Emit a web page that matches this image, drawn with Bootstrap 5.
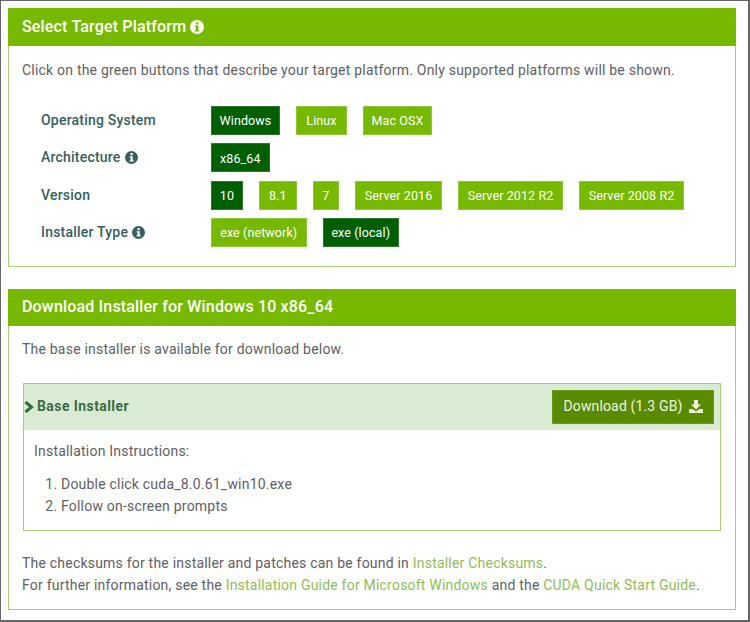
<!DOCTYPE html>
<html lang="en"><head><meta charset="utf-8"><title>CUDA Installer</title>
<link href="https://cdn.jsdelivr.net/npm/bootstrap@5.3.0/dist/css/bootstrap.min.css" rel="stylesheet">
<style>
html,body{margin:0;background:#fff}
.shot-frame{width:750px;height:622px;border:1px solid #666;border-right-width:2px;border-bottom-width:2px;padding:7px 12px 0 7px;font-family:Roboto,"Liberation Sans",sans-serif;font-size:14px;letter-spacing:.21px;color:#606064;overflow:hidden}
.panel-box{border:1px solid #a5cf72;border-radius:0;background:#fff;margin-bottom:22px}
.panel-head{background:#76b900;color:#fff;font-weight:500;font-size:16px;letter-spacing:.17px;height:38px;margin:-1px -1px 0;padding:0 14px;display:flex;align-items:center;gap:4px;border-radius:0;border:0}
.panel-head-short{height:37px;padding-bottom:2px}
.panel-text{padding:0 13px}
.intro{height:50px;padding-top:14px;margin:0;line-height:20px}
.opt-rows{padding:0 18px 19px 32px;margin-top:10px;display:flex;flex-direction:column;gap:8.4px}
.opt-row{display:flex;height:29px;align-items:center}
.opt-label{width:170px;color:#35605f;font-weight:500;display:flex;align-items:center;gap:4px}
.opt-btns{display:flex;gap:16px}
.opt-btn{background:#76b900;color:#fff;border:1px solid #8cc63a;border-radius:0;height:29px;padding:2px 0 0;font-size:12.5px;line-height:1;display:flex;align-items:center;justify-content:center;letter-spacing:.1px;font-weight:400}
.opt-btn.is-on{background:#005f00;border-color:#2d7a2d}
.w-26{width:26.5px}.w-32{width:32px}.w-37{width:37.5px}.w-51{width:51px}.w-58{width:58.5px}.w-69{width:69px}.w-76{width:76.5px}.w-87{width:87px}.w-95{width:95.5px}.w-105{width:105px}
.dl-intro{height:57px;padding-top:13px;margin:0;line-height:20px}
.base-box{border:1px solid #a5cf72;margin:0 14px 0 14px;height:148px}
.base-bar{background:#d9ebd3;height:46px;display:flex;align-items:center;justify-content:space-between;padding:0 6px 0 0;color:#3d6b47;font-weight:700}
.base-title{display:flex;align-items:center;gap:3px;letter-spacing:.42px;padding-bottom:1px}
.dl-btn{background:#5a8a00;color:#eef4e0;height:34px;width:162px;border:1px solid #6b9a1a;border-radius:0;display:flex;align-items:center;justify-content:center;gap:6px;font-size:14px;letter-spacing:.15px;padding:0 0 1px}
.base-body{padding:11px 10px 0}
.base-body p{margin:0 0 12px;line-height:20px}
.base-body ol{margin:0;padding-left:27px;line-height:22px}
.foot-note{margin:0;padding:21px 13px 13px;line-height:22px}
.foot-note a{color:#8fbc5a;text-decoration:none}
</style></head><body>
<div class="shot-frame">
<section class="card panel-box">
<div class="panel-head">Select Target Platform <svg width="14" height="14" viewBox="0 0 14 14"><circle cx="7" cy="7" r="7" fill="#fff"/><rect x="5.9" y="2.3" width="2.4" height="2.2" fill="#76b900"/><path d="M5 5.6h3.3v4.4h1v1.4H5V10h1V7H5z" fill="#76b900"/></svg></div>
<p class="panel-text intro">Click on the green buttons that describe your target platform. Only supported platforms will be shown.</p>
<div class="opt-rows">
<div class="opt-row"><div class="opt-label">Operating System</div><div class="opt-btns"><button class="btn opt-btn is-on w-69">Windows</button><button class="btn opt-btn w-51">Linux</button><button class="btn opt-btn w-69">Mac OSX</button></div></div>
<div class="opt-row"><div class="opt-label">Architecture <svg width="13" height="13" viewBox="0 0 14 14"><circle cx="7" cy="7" r="7" fill="#35605f"/><rect x="5.9" y="2.3" width="2.4" height="2.2" fill="#fff"/><path d="M5 5.6h3.3v4.4h1v1.4H5V10h1V7H5z" fill="#fff"/></svg></div><div class="opt-btns"><button class="btn opt-btn is-on w-58">x86_64</button></div></div>
<div class="opt-row"><div class="opt-label">Version</div><div class="opt-btns"><button class="btn opt-btn is-on w-32">10</button><button class="btn opt-btn w-37">8.1</button><button class="btn opt-btn w-26">7</button><button class="btn opt-btn w-87">Server 2016</button><button class="btn opt-btn w-105">Server 2012 R2</button><button class="btn opt-btn w-105">Server 2008 R2</button></div></div>
<div class="opt-row"><div class="opt-label">Installer Type <svg width="13" height="13" viewBox="0 0 14 14"><circle cx="7" cy="7" r="7" fill="#35605f"/><rect x="5.9" y="2.3" width="2.4" height="2.2" fill="#fff"/><path d="M5 5.6h3.3v4.4h1v1.4H5V10h1V7H5z" fill="#fff"/></svg></div><div class="opt-btns"><button class="btn opt-btn w-95">exe (network)</button><button class="btn opt-btn is-on w-76">exe (local)</button></div></div>
</div>
</section>
<section class="card panel-box">
<div class="panel-head panel-head-short">Download Installer for Windows 10 x86_64</div>
<p class="panel-text dl-intro">The base installer is available for download below.</p>
<div class="base-box">
<div class="base-bar"><div class="base-title"><svg width="10" height="12" viewBox="0 0 10 12"><path d="M1.5 1 7.5 6 1.5 11" fill="none" stroke="#2f6b3a" stroke-width="3"/></svg>Base Installer</div>
<button class="btn dl-btn">Download (1.3 GB) <svg width="14" height="13" viewBox="0 0 14 13"><path d="M5 0h4v4.5h3L7 9.5 2 4.5h3z" fill="#eef4e0"/><path d="M0 9h3.6L7 11.4 10.4 9H14v4H0z" fill="#eef4e0"/></svg></button></div>
<div class="base-body"><p>Installation Instructions:</p><ol><li>Double click cuda_8.0.61_win10.exe</li><li>Follow on-screen prompts</li></ol></div>
</div>
<p class="foot-note">The checksums for the installer and patches can be found in <a href="#">Installer Checksums</a>.<br>For further information, see the <a href="#">Installation Guide for Microsoft Windows</a> and the <a href="#">CUDA Quick Start Guide</a>.</p>
</section>
</div>
<script src="https://cdn.jsdelivr.net/npm/bootstrap@5.3.0/dist/js/bootstrap.bundle.min.js"></script>
</body></html>
